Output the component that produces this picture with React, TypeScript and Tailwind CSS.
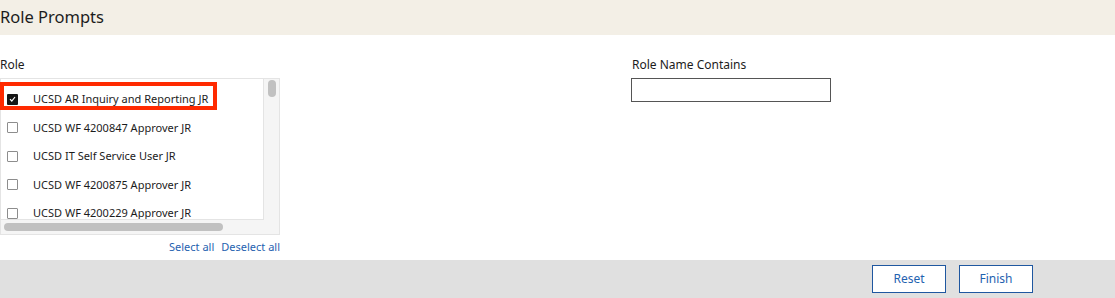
const roles = [
  { name: "UCSD AR Inquiry and Reporting JR", checked: true },
  { name: "UCSD WF 4200847 Approver JR", checked: false },
  { name: "UCSD IT Self Service User JR", checked: false },
  { name: "UCSD WF 4200875 Approver JR", checked: false },
  { name: "UCSD WF 4200229 Approver JR", checked: false },
];

const Checkbox = ({ checked }: { checked: boolean }) =>
  checked ? (
    <span className="w-[11px] h-[11px] bg-[#161616] rounded-[1px] flex items-center justify-center shrink-0">
      <svg width="7" height="6" viewBox="0 0 7 6">
        <path d="M1 3.2 L2.8 5 L6 1" stroke="white" strokeWidth="1.2" fill="none" />
      </svg>
    </span>
  ) : (
    <span className="w-[11px] h-[11px] border border-[#8d8d8d] rounded-[1px] bg-white shrink-0" />
  );

const App = () => {
  return (
    <div
      className="w-[1115px] h-[298px] bg-white flex flex-col text-[#1c1c1c] overflow-hidden"
      style={{ fontFamily: '"Noto Sans", sans-serif' }}
    >
      <header className="h-[35px] bg-[#f3efe6] flex items-center">
        <h1 className="text-[16.5px] leading-none">Role Prompts</h1>
      </header>

      <section className="flex flex-1 pt-[22px]">
        <div className="w-[280px] flex flex-col">
          <p className="text-[12px] leading-[16px] mb-[5px]">Role</p>
          <div className="relative w-[280px] h-[157px] border border-[#e4e4e4] bg-[#f5f5f5] flex flex-col">
            <div className="flex h-[141px]">
              <ul className="w-[263px] bg-white border-r border-b border-[#e4e4e4] pt-[6px] overflow-hidden">
                {roles.map((r) => (
                  <li key={r.name} className="h-[28.5px] flex items-center pl-[6px] gap-[15px] text-[11px] whitespace-nowrap">
                    <Checkbox checked={r.checked} />
                    <span>{r.name}</span>
                  </li>
                ))}
              </ul>
              <div className="flex-1 pt-[1px] flex justify-center">
                <div className="w-[8px] h-[17px] rounded-full bg-[#c1c1c1]" />
              </div>
            </div>
            <div className="flex-1 flex items-center pl-[3px]">
              <div className="w-[219px] h-[8px] rounded-full bg-[#c1c1c1]" />
            </div>
            <div className="absolute left-[-1px] top-[3px] w-[217px] h-[28px] border-[4px] border-[#ff2a00]" />
          </div>
          <div className="flex justify-end gap-[7px] mt-[5px] text-[11px] leading-[14px] text-[#1f62b0]">
            <a>Select all</a>
            <a>Deselect all</a>
          </div>
        </div>

        <div className="ml-[351px] flex flex-col">
          <p className="text-[12px] leading-[16px] mb-[5px] pl-[1px]">Role Name Contains</p>
          <input className="w-[200px] h-[24px] border border-[#555] outline-none" />
        </div>
      </section>

      <footer className="h-[38px] bg-[#e0e0e0] flex justify-end items-start pt-[5px] pr-[82px] gap-[13px]">
        <button className="w-[74px] h-[28px] bg-white border border-[#1f57a0] text-[#1f62b0] text-[12px]">Reset</button>
        <button className="w-[74px] h-[28px] bg-white border border-[#1f57a0] text-[#1f62b0] text-[12px]">Finish</button>
      </footer>
    </div>
  );
};

export default App;
